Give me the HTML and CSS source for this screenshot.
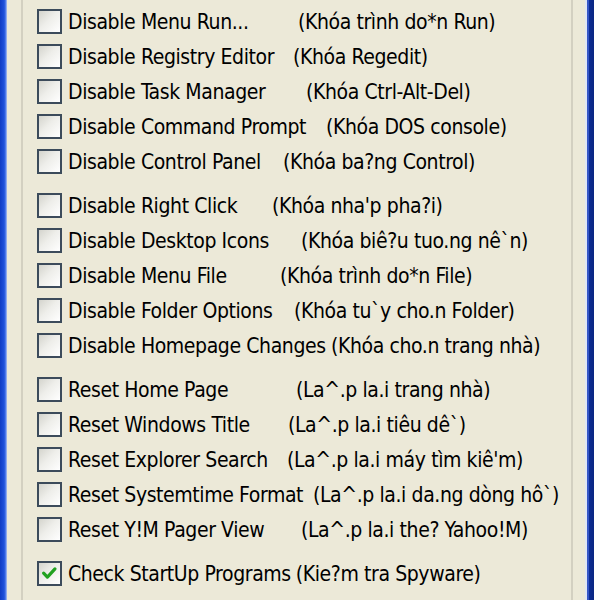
FILE: index.html
```html
<!DOCTYPE html>
<html>
<head>
<meta charset="utf-8">
<link rel="stylesheet" href="styles.css">
</head>
<body>
<div class="window">
  <div class="frame-left"></div>
  <div class="client">
    <div class="group">
      <div class="section">
        <div class="row"><span class="box"></span><span class="label w1">Disable Menu Run...</span><span class="note">(Khóa trình do*n Run)</span></div>
        <div class="row"><span class="box"></span><span class="label w2">Disable Registry Editor</span><span class="note">(Khóa Regedit)</span></div>
        <div class="row"><span class="box"></span><span class="label w3">Disable Task Manager</span><span class="note">(Khóa Ctrl-Alt-Del)</span></div>
        <div class="row"><span class="box"></span><span class="label w4">Disable Command Prompt</span><span class="note">(Khóa DOS console)</span></div>
        <div class="row"><span class="box"></span><span class="label w5">Disable Control Panel</span><span class="note">(Khóa ba?ng Control)</span></div>
      </div>
      <div class="section">
        <div class="row"><span class="box"></span><span class="label w6">Disable Right Click</span><span class="note">(Khóa nha'p pha?i)</span></div>
        <div class="row"><span class="box"></span><span class="label w7">Disable Desktop Icons</span><span class="note">(Khóa biê?u tuo.ng nê`n)</span></div>
        <div class="row"><span class="box"></span><span class="label w8">Disable Menu File</span><span class="note">(Khóa trình do*n File)</span></div>
        <div class="row"><span class="box"></span><span class="label w9">Disable Folder Options</span><span class="note">(Khóa tu`y cho.n Folder)</span></div>
        <div class="row"><span class="box"></span><span class="label w10">Disable Homepage Changes</span><span class="note">(Khóa cho.n trang nhà)</span></div>
      </div>
      <div class="section">
        <div class="row"><span class="box"></span><span class="label w11">Reset Home Page</span><span class="note">(La^.p la.i trang nhà)</span></div>
        <div class="row"><span class="box"></span><span class="label w12">Reset Windows Title</span><span class="note">(La^.p la.i tiêu dê`)</span></div>
        <div class="row"><span class="box"></span><span class="label w13">Reset Explorer Search</span><span class="note">(La^.p la.i máy tìm kiê'm)</span></div>
        <div class="row"><span class="box"></span><span class="label w14">Reset Systemtime Format</span><span class="note">(La^.p la.i da.ng dòng hô`)</span></div>
        <div class="row"><span class="box"></span><span class="label w15">Reset Y!M Pager View</span><span class="note">(La^.p la.i the? Yahoo!M)</span></div>
      </div>
      <div class="section">
        <div class="row"><span class="box checked"><svg viewBox="0 0 25 25" width="21" height="21"><path d="M5.5 12 L10 16.8 L19 7" fill="none" stroke="#21a121" stroke-width="3.8" stroke-linecap="round" stroke-linejoin="round"/></svg></span><span class="label w16">Check StartUp Programs</span><span class="note">(Kie?m tra Spyware)</span></div>
      </div>
    </div>
  </div>
  <div class="frame-right"></div>
</div>
</body>
</html>
```

FILE: styles.css
```css
html, body {
  margin: 0;
  padding: 0;
  background: #ece9d8;
}

.window {
  display: flex;
  width: 594px;
  height: 600px;
  overflow: hidden;
}

.frame-left {
  width: 7px;
  flex: none;
  background: linear-gradient(to right, #0f3cc4 0%, #1f52dc 60%, #5d86ec 85%, #b9cbf4 100%);
}

.client {
  flex: 1;
  background: #ece9d8;
  padding: 0 12px 0 14px;
}

.group {
  height: 100%;
  box-sizing: border-box;
  border-left: 2px solid #d3d0c1;
  border-right: 2px solid #d3d0c1;
  padding: 4px 0 0 14px;
}

.section + .section {
  margin-top: 9px;
}

.row {
  display: flex;
  align-items: center;
  height: 35px;
  font-family: "DejaVu Sans Condensed", "DejaVu Sans", sans-serif;
  font-size: 21px;
  letter-spacing: -0.4px;
  color: #000;
  white-space: nowrap;
}

.box {
  width: 25px;
  height: 25px;
  box-sizing: border-box;
  border: 2px solid #3c4b5b;
  background: linear-gradient(135deg, #d4d4cd 0%, #eeeeea 45%, #ffffff 100%);
  flex: none;
  display: flex;
  align-items: center;
  justify-content: center;
}

.label {
  margin-left: 6px;
}

.note {
  margin-left: 5px;
}

.w1 { min-width: 225px; }
.w2 { min-width: 220px; }
.w3 { min-width: 233px; }
.w4 { min-width: 253px; }
.w5 { min-width: 210px; }
.w6 { min-width: 199px; }
.w7 { min-width: 228px; }
.w8 { min-width: 207px; }
.w9 { min-width: 221px; }
.w10 { min-width: 258px; }
.w11 { min-width: 223px; }
.w12 { min-width: 215px; }
.w13 { min-width: 214px; }
.w14 { min-width: 240px; }
.w15 { min-width: 228px; }
.w16 { min-width: 221px; }

.frame-right {
  width: 9px;
  flex: none;
  background: linear-gradient(to right, #dfe6f4 0px, #dfe6f4 2px, #3556c6 2px, #3556c6 4px, #0c2c94 4px, #0a2682 100%);
}
```
